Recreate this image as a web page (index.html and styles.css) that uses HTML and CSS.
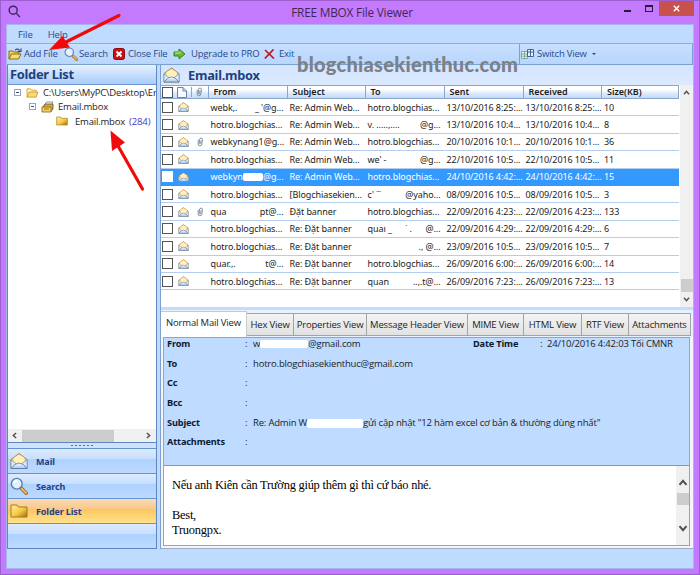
FILE: index.html
```html
<!DOCTYPE html>
<html lang="vi">
<head>
<meta charset="utf-8">
<title>FREE MBOX File Viewer</title>
<link rel="stylesheet" href="styles.css">
</head>
<body>
<svg class="defs" width="0" height="0">
  <defs>
    <linearGradient id="gold" x1="0" y1="0" x2="1" y2="1"><stop offset="0" stop-color="#fff0a0"/><stop offset=".55" stop-color="#f6c945"/><stop offset="1" stop-color="#a56c08"/></linearGradient>
    <linearGradient id="paper" x1="0" y1="0" x2="0" y2="1"><stop offset="0" stop-color="#ffffff"/><stop offset="1" stop-color="#9ec6f3"/></linearGradient>
    <symbol id="mail" viewBox="0 0 18 17">
      <path d="M1 7 9 1l8 6v9H1z" fill="#f3c25a" stroke="#a9844a"/>
      <path d="M3.500 5.500 9 2l5.500 3.500V11h-11z" fill="#fff0bd"/>
      <path d="M1 7.500 6 11 1 16zM17 7.500 12 11l5 5z" fill="#d8eafd" stroke="#7393ba" stroke-width=".7"/>
      <path d="M1 16q8-11 16 0z" fill="url(#paper)" stroke="#5679a8" stroke-width=".8"/>
    </symbol>
    <symbol id="search" viewBox="0 0 20 20">
      <path d="m12 12 6 6" stroke="#9b6d24" stroke-width="4" stroke-linecap="round"/>
      <path d="m13 13 5 5" stroke="#f5bd57" stroke-width="2" stroke-linecap="round"/>
      <circle cx="7.500" cy="7.500" r="6" fill="#dff0ff" stroke="#5f7fa8" stroke-width="1.600"/>
      <path d="M4 7q1-3 4-3" fill="none" stroke="#fff" stroke-width="1.500"/>
    </symbol>
    <symbol id="folder" viewBox="0 0 18 14">
      <path d="M1 1h6l1.500 2H17v10H1z" fill="url(#gold)" stroke="#a77b17"/>
    </symbol>
    <symbol id="open" viewBox="0 0 14 12">
      <path d="M1 11V2h4l1 1.500h5V6" fill="#fff3b5" stroke="#d6a53a"/>
      <path d="M1 11 3.500 5.500H13L11 11z" fill="#fbd978" stroke="#d19b2e"/>
    </symbol>
    <symbol id="add" viewBox="0 0 14 12">
      <path d="M1 11V3h4l1 1h5v2" fill="#f2cf56" stroke="#8c6d1f"/>
      <path d="M1 11 3.500 6H13l-2.500 5z" fill="#f7dd72" stroke="#8c6d1f"/>
      <path d="M7 2q3-2 4.500.7M13 .5v3H9.500" fill="none" stroke="#264a91" stroke-width="1.200"/>
    </symbol>
    <symbol id="stack" viewBox="0 0 13 12">
      <path d="M3 5 5.500 1H12L9.500 5z" fill="#fff" stroke="#777" stroke-width=".8"/>
      <path d="M1.500 6.500 4 3h8v5L9.500 11" fill="#d8aa3d" stroke="#5f5434" stroke-width=".8"/>
      <path d="M1 6h9v5H1z" fill="#f8d25d" stroke="#7f6325" stroke-width=".8"/>
      <path d="M3 8h5" stroke="#8f752e"/>
    </symbol>
    <symbol id="clip" viewBox="0 0 8 11">
      <path d="M2 3v4.500a2 2 0 0 0 4 .3L6.700 3a1.600 1.600 0 0 0-3.200-.3L3.200 7a.8.8 0 0 0 1.500.2L5.200 3.500" fill="none" stroke="#68788a" stroke-width=".9"/>
    </symbol>
    <symbol id="doc" viewBox="0 0 10 11">
      <path d="M.5.5H6L9.500 4v6.500h-9zM6 .5V4h3.500" fill="#f7fbff" stroke="#6483b8"/>
    </symbol>
    <symbol id="chev" viewBox="0 0 8 6"><path d="M1 5 4 1.500 7 5" fill="none" stroke="#505050" stroke-width="1.700"/></symbol>
  </defs>
</svg>

<div class="window">
  <header class="titlebar">
    <svg class="lens" viewBox="0 0 12 12"><circle cx="4.800" cy="4.800" r="3.700"/><path d="m7.500 7.500 3.500 3.500"/></svg>
    <h1>FREE MBOX File Viewer</h1>
    <div class="controls">
      <span class="min"></span><span class="max"></span>
      <span class="close"><svg viewBox="0 0 7 7"><path d="m.8.8 5.400 5.400m0-5.400L.8 6.200"/></svg></span>
    </div>
  </header>

  <div class="client">
    <nav class="menubar"><span>File</span><span>Help</span></nav>
    <div class="toolbar">
      <div class="tools">
        <svg class="t-add"><use href="#add"/></svg><span class="l-add">Add File</span>
        <svg class="t-search"><use href="#search"/></svg><span class="l-search">Search</span>
        <svg class="t-close" viewBox="0 0 12 12"><rect x=".5" y=".5" width="11" height="11" rx="2" fill="#c81212" stroke="#8f0a0a"/><path d="m3.500 3.500 5 5m0-5-5 5" stroke="#fff" stroke-width="1.900"/></svg><span class="l-close">Close File</span>
        <svg class="t-up" viewBox="0 0 13 12"><path d="M1 4h5V1l6 5-6 5V8H1z" fill="#63c12c" stroke="#3d7e20"/><path d="M2 5h5V3.500" fill="none" stroke="#c7f29c"/></svg><span class="l-up">Upgrade to PRO</span>
        <svg class="t-exit" viewBox="0 0 11 10"><path d="m1 1 9 8.500M9.500.5.8 9.500" stroke="#c3141b" stroke-width="1.700"/></svg><span class="l-exit">Exit</span>
      </div>
      <div class="switch">
        <svg viewBox="0 0 13 10"><path d="M.5 2.500h6v7h-6zM.5 5h6M.5 7.200h6M3.500 2.500v7" fill="#e8f6e8" stroke="#6d9a8d" stroke-width=".8"/><path d="M6.500.5h6v7h-6zM9.500.5v7M6.500 3h6" fill="#e6f1ff" stroke="#35588f" stroke-width=".9"/></svg>
        <span>Switch View</span><i></i>
      </div>
    </div>

    <div class="panes">
      <aside class="side">
        <h2 class="bar">Folder List</h2>
        <div class="tree">
          <div class="node n1"><b class="pm"></b><svg><use href="#open"/></svg><span>C:\Users\MyPC\Desktop\Er</span></div>
          <div class="node n2"><b class="pm"></b><svg><use href="#stack"/></svg><span>Email.mbox</span></div>
          <div class="node n3"><svg><use href="#folder"/></svg><span>Email.mbox</span><em>(284)</em></div>
        </div>
        <div class="hscroll"><svg class="left"><use href="#chev"/></svg><i></i><svg class="right"><use href="#chev"/></svg></div>
        <div class="grip"><i></i></div>
        <div class="nav"><svg><use href="#mail"/></svg><span>Mail</span></div>
        <div class="nav"><svg><use href="#search"/></svg><span>Search</span></div>
        <div class="nav active"><svg><use href="#folder"/></svg><span>Folder List</span></div>
        <div class="nav last"></div>
      </aside>

      <main class="main">
        <div class="mailbar"><svg><use href="#mail"/></svg><h2>Email.mbox</h2></div>
        <div class="list">
          <div class="grid">
            <div class="row head">
              <span class="box"></span><svg class="doc"><use href="#doc"/></svg><span class="att"><svg><use href="#clip"/></svg></span>
              <b>From</b><b>Subject</b><b>To</b><b>Sent</b><b>Received</b><b>Size(KB)</b>
            </div>
            <div id="rows"></div>
          </div>
          <div class="vscroll"><svg><use href="#chev"/></svg><i></i><svg class="down"><use href="#chev"/></svg></div>
        </div>

        <section class="viewer">
          <div class="tabs">
            <span class="on">Normal Mail View</span><span>Hex View</span><span>Properties View</span><span>Message Header View</span><span>MIME View</span><span>HTML View</span><span>RTF View</span><span>Attachments</span>
          </div>
          <div class="body">
            <div class="fields">
              <div class="field"><b>From</b><i>:</i><span class="masked from">w<u class="m1"></u>@gmail.com</span><b class="dt">Date Time</b><i class="dtc">:</i><span>24/10/2016 4:42:03 Tối CMNR</span></div>
              <div class="field"><b>To</b><i>:</i><span>hotro.blogchiasekienthuc@gmail.com</span></div>
              <div class="field"><b>Cc</b><i>:</i></div>
              <div class="field"><b>Bcc</b><i>:</i></div>
              <div class="field"><b>Subject</b><i>:</i><span class="masked subj">Re: Admin W<u class="m2"></u></span><span>gửi cập nhật "12 hàm excel cơ bản &amp; thường dùng nhất"</span></div>
              <div class="field"><b>Attachments</b><i>:</i></div>
            </div>
            <div class="message">
              <div class="text"><p>Nếu anh Kiên cần Trường giúp thêm gì thì cứ báo nhé.</p><p>&nbsp;</p><p>Best,</p><p>Truongpx.</p></div>
              <div class="mscroll"><svg><use href="#chev"/></svg><i></i><svg class="down"><use href="#chev"/></svg></div>
            </div>
          </div>
        </section>
      </main>
    </div>
  </div>

  <div class="watermark">blogchiasekienthuc.com</div>
  <svg class="arrows" viewBox="0 0 160 200">
    <path d="M119 15.500 64 43" stroke="#f00a0a" stroke-width="3.200" stroke-linecap="round"/>
    <path d="M49 50 62.500 36 70 47.500z" fill="#f00a0a"/>
    <path d="m142.500 189-25-44" stroke="#f00a0a" stroke-width="3.200" stroke-linecap="round"/>
    <path d="M110.500 130.500 112 151l13-8.500z" fill="#f00a0a"/>
  </svg>
</div>
<script src="rows.js"></script>
</body>
</html>
```
FILE: styles.css
```css
* { box-sizing: border-box; }
body { margin: 0; font-family: "Open Sans", "Noto Sans", sans-serif; font-size: 9.500px; color: #1c1c1c; }
h1, h2, p { margin: 0; font-weight: normal; }
i, em { font-style: normal; }
svg { display: block; flex: none; }
.defs { position: absolute; }
.window { position: relative; width: 700px; height: 575px; overflow: hidden; background: #c47aff; border: 1px solid #9c5fd0; padding: 0 5px 5px; }

.titlebar { height: 23px; display: flex; position: relative; justify-content: center; }
.titlebar h1 { font-size: 11.800px; line-height: 23px; letter-spacing: -.2px; color: #3d2852; padding-left: 4px; }
.lens { position: absolute; left: 2px; top: 4px; width: 13px; height: 13px; fill: none; stroke: #3b2850; stroke-width: 1.300; }
.controls { position: absolute; right: 0; top: 0; display: flex; }
.min { width: 7px; height: 2px; background: #2b1838; margin: 9px 14px 0 0; }
.max { width: 8px; height: 7px; border: 1px solid #2b1838; border-top-width: 2px; margin: 4px 6px 0 0; }
.close { width: 35px; height: 15px; background: #c8504f; display: flex; align-items: center; justify-content: center; }
.close svg { width: 7px; height: 7px; stroke: #fff; stroke-width: 1.400; }

.client { height: 545px; background: #bfdbff; border: 1px solid #a9b6ee; border-top-color: #aeb2f5; }
.menubar { height: 19px; display: flex; gap: 15px; padding-left: 11px; line-height: 19px; color: #1f4b8f; border-bottom: 1px solid #93add0; letter-spacing: -.1px; }
.toolbar { height: 21px; display: flex; background: linear-gradient(#c9e0ff, #b8d6fc); border-bottom: 1px solid #7ba2cf; color: #1f4b8f; }
.tools { width: 512px; display: flex; align-items: center; white-space: nowrap; letter-spacing: -.2px; }
.tools span { flex: none; margin-top: -1px; }
.t-add { width: 14px; height: 12px; margin-left: 1px; }
.t-search { width: 14px; height: 14px; }
.t-close { width: 12px; height: 12px; }
.t-up { width: 13px; height: 12px; }
.t-exit { width: 11px; height: 10px; }
.tools .l-add { width: 40px; margin-left: 2px; }
.tools .l-search { width: 34px; margin-left: 1px; }
.tools .l-close { width: 45px; margin-left: 3px; }
.tools .l-up { width: 73px; margin-left: 5px; }
.tools .l-exit { margin-left: 4px; }
.switch { flex: 1; display: flex; align-items: center; border-left: 1px solid #7ba2cf; border-right: 1px solid #7ba2cf; padding-left: 1px; letter-spacing: -.2px; }
.switch span { margin-top: -1px; }
.switch svg { width: 13px; height: 10px; margin-right: 3px; }
.switch i { border: 2px solid transparent; border-top-color: #1f4b8f; margin: 2px 0 0 5px; }

.panes { display: flex; height: 484px; gap: 3px; }
.side { width: 150px; flex: none; display: flex; flex-direction: column; border: 1px solid #5d86c4; border-top: 0; }
.bar { height: 20px; padding-left: 2px; font: bold 12.900px/19px "Noto Sans", sans-serif; letter-spacing: -.3px; color: #1f3f7d; background: linear-gradient(#e6f1ff, #a9cdfb); border-bottom: 1px solid #6e95cf; }
.tree { height: 344px; background: #fff; overflow: hidden; white-space: nowrap; letter-spacing: -.2px; }
.node { display: flex; align-items: center; height: 14.600px; }
.pm { flex: none; width: 7px; height: 7px; border: 1px solid #9aa3b0; background: linear-gradient(#334b80, #334b80) center / 3px 1px no-repeat; }
.n1 { padding-left: 6px; }
.n1 svg { width: 13px; height: 11px; margin: 0 4px 0 5px; }
.n2 { padding-left: 21px; }
.n2 svg { width: 13px; height: 12px; margin: 0 4px 0 5px; }
.n3 { padding-left: 48px; }
.n3 svg { width: 12px; height: 10px; margin-right: 7px; }
.n3 em { color: #3a3ac8; margin-left: 4px; letter-spacing: -.1px; }
.hscroll { height: 14px; display: flex; align-items: center; background: #f0f0f0; border-bottom: 1px solid #5d86c4; }
.hscroll svg { width: 7px; height: 5px; }
.hscroll .left { transform: rotate(-90deg); margin: 0 4px 0 3px; }
.hscroll i { width: 92px; height: 12px; background: #cdcdcd; margin-right: 31px; }
.hscroll .right { transform: rotate(90deg); }
.grip { height: 5px; background: #cfe3ff; display: flex; justify-content: center; align-items: center; }
.grip i { width: 23px; height: 1px; background: repeating-linear-gradient(90deg, #56709c 0 2px, transparent 2px 4px); }
.nav { height: 25px; display: flex; align-items: center; padding-left: 2px; gap: 8px; border-top: 1px solid #6593cf; background: linear-gradient(#dcebff, #c9dffe 40%, #aed2ff 42%, #bddaff); font: bold 9px "Noto Sans", sans-serif; letter-spacing: -.12px; color: #1f3f8d; }
.nav svg { width: 18px; height: 18px; }
.nav.active { background: linear-gradient(#fbdab4, #f9c98b 40%, #fdc55e 42%, #ffe38d); }
.nav.last { flex: 1; }

.main { flex: 1; min-width: 0; display: flex; flex-direction: column; background: #fff; border-left: 1px solid #7f9fd0; }
.mailbar { height: 20px; display: flex; align-items: center; gap: 8px; padding-left: 2px; background: linear-gradient(#d3e5ff, #dceaff); }
.mailbar svg { width: 17px; height: 16px; }
.mailbar h2 { font: bold 12.800px/20px "Noto Sans", sans-serif; letter-spacing: -.25px; color: #1f3f7d; }
.list { height: 222px; display: flex; }
.grid { width: 519px; }
.row { display: grid; grid-template-columns: 16px 14px 18.500px 79px 78px 79px 79px 78.500px 1fr; align-items: center; height: 17.400px; padding-left: 1px; border-bottom: 1px solid #b4cfee; font: 9px "Noto Sans", sans-serif; letter-spacing: -.08px; }
.row span { white-space: nowrap; }
.head { height: 14px; border: 1px solid #8aa6cc; border-left: 0; background: linear-gradient(#fff 30%, #dcebfc 60%, #c3daf7); letter-spacing: 0; }
.head b { font-weight: 600; line-height: 12px; padding-left: 5px; border-left: 1px solid #8aa6cc; margin-left: -3px; }
.box { width: 11px; height: 11px; background: #fff; border: 1px solid #555; }
.doc { width: 10px; height: 11px; margin-left: -1px; }
.att { border-left: 1px solid #8aa6cc; padding-left: 3px; margin-left: -1px; }
.att svg, .row .clip { width: 8px; height: 10px; }
.row .clip { margin-left: 4px; }
.row .env { width: 11px; height: 10px; }
.cell { display: flex; justify-content: space-between; padding-right: 6px; }
.sel { background: #3399ff; color: #fff; border-color: #3399ff; }
.sel .box { border-color: #fff; }
.blot { background: #fff; width: 20px; height: 8px; margin: 3px 0 0; border-radius: 2px; }
.vscroll { width: 13px; margin-left: 1px; background: #f0f0f0; display: flex; flex-direction: column; align-items: center; }
.vscroll svg { width: 7px; height: 5px; margin: 5px 0 0; }
.vscroll i { width: 12px; height: 13px; background: #cdcdcd; margin-top: 184px; }
.down { transform: rotate(180deg); }

.viewer { height: 242px; border-top: 3px solid #c3dbfc; background: #f5f5f8; border-bottom: 1px solid #9cacc6; }
.tabs { height: 27px; display: flex; align-items: flex-end; padding-top: 1px; background: #e9f1fd; }
.tabs span { height: 23px; line-height: 21px; text-align: center; white-space: nowrap; background: linear-gradient(#f4f4f4, #e2e2e2); border: 1px solid #a3a3a3; border-left-width: 0; margin-bottom: 1px; letter-spacing: -.17px; }
.tabs .on { width: 86px; height: 26px; margin: 0; background: #fff; border-color: #c9c9c9; border-bottom: 0; }
.tabs span:nth-child(2) { width: 47px; }
.tabs span:nth-child(3) { width: 73px; }
.tabs span:nth-child(4) { width: 101px; }
.tabs span:nth-child(5) { width: 56px; }
.tabs span:nth-child(6) { width: 58px; }
.tabs span:nth-child(7) { width: 47px; }
.tabs span:nth-child(8) { width: 62px; }
.body { margin: 0 3px 0 2px; height: 209px; border: 1px solid #86a7cf; }
.fields { height: 128px; background: #bfdbff; border-bottom: 1px solid #7d98cc; }
.field { height: 19.700px; line-height: 11px; display: flex; white-space: nowrap; letter-spacing: -.19px; }
.field b { width: 81px; padding-left: 3px; font: bold 9.200px/11px "Noto Sans", sans-serif; letter-spacing: -.15px; color: #0d1930; }
.field i { width: 8px; }
.field .dt { width: 70px; }
.field .dtc { width: 7px; }
.masked { display: flex; }
.from { width: 217px; }
.subj { width: 110px; }
.m1, .m2 { background: #fff; height: 9px; margin-top: 2px; border-radius: 2px; }
.m1 { width: 48px; height: 8px; }
.m2 { width: 59px; }
.message { height: 79px; display: flex; background: #fff; }
.text { flex: 1; padding: 12px 0 0 8px; font: 12.400px/15px "Liberation Serif", serif; color: #000; letter-spacing: -.23px; white-space: nowrap; }
.mscroll { width: 13px; background: #f0f0f0; display: flex; flex-direction: column; align-items: center; padding-top: 13px; }
.mscroll svg { width: 10px; height: 7px; }
.mscroll i { width: 12px; height: 12px; background: #cdcdcd; margin: 7px 0 20px; }

.watermark { position: absolute; left: 296px; top: 50px; font: 900 20px/26px Lato, sans-serif; letter-spacing: .28px; color: #7c8087; }
.arrows { position: absolute; left: -1px; top: -1px; width: 160px; height: 200px; fill: none; }
```
FILE: rows.js
```javascript
// Each text cell is a list of fragments spread across its column.
const H = ["hotro.blogchias..."];
const rows = [
  [0, ["webk,.", "_ '@g..."], ["Re: Admin Web..."], H, "13/10/2016 8:25:...", 10],
  [0, H, ["Re: Admin Web..."], ["v. .....,....", "@g..."], "13/10/2016 10:4...", 8],
  [1, ["webkynang1@g..."], ["Re: Admin Web..."], H, "20/10/2016 10:1...", 36],
  [0, H, ["Re: Admin Web..."], ["we' -", "@g..."], "22/10/2016 10:5...", 11],
  [0, ["webkyn", "", "@g..."], ["Re: Admin Web..."], H, "24/10/2016 4:42:...", 15],
  [0, H, ["[Blogchiasekien..."], ["c' ˙˙˙", "@yaho..."], "08/09/2016 10:5...", 3],
  [1, ["qua", "pt@..."], ["Đặt banner"], H, "22/09/2016 4:23:...", 133],
  [0, H, ["Re: Đặt banner"], ["quaı _", "˙ .", "@..."], "22/09/2016 4:29:...", 6],
  [0, H, ["Re: Đặt banner"], ["", "., @..."], "23/09/2016 10:5...", 7],
  [0, ["quar.,.", "t@..."], ["Re: Đặt banner"], H, "26/09/2016 6:00:...", 14],
  [0, H, ["Re: Đặt banner"], ["quan", "..,.t@..."], "26/09/2016 7:23:...", 13]
];
const cell = parts => `<span class="cell">${parts.map((t, i) =>
  `<span${i === 1 && !t ? ' class="blot"' : ""}>${t}</span>`).join("")}</span>`;
document.getElementById("rows").innerHTML = rows.map((r, i) => `
  <div class="row${i === 4 ? " sel" : ""}">
    <span class="box"></span>
    <svg class="env"><use href="#mail"/></svg>
    ${r[0] ? '<svg class="clip"><use href="#clip"/></svg>' : "<span></span>"}
    ${cell(r[1])}${cell(r[2])}${cell(r[3])}
    <span>${r[4]}</span><span>${r[4]}</span><span>${r[5]}</span>
  </div>`).join("");
```
